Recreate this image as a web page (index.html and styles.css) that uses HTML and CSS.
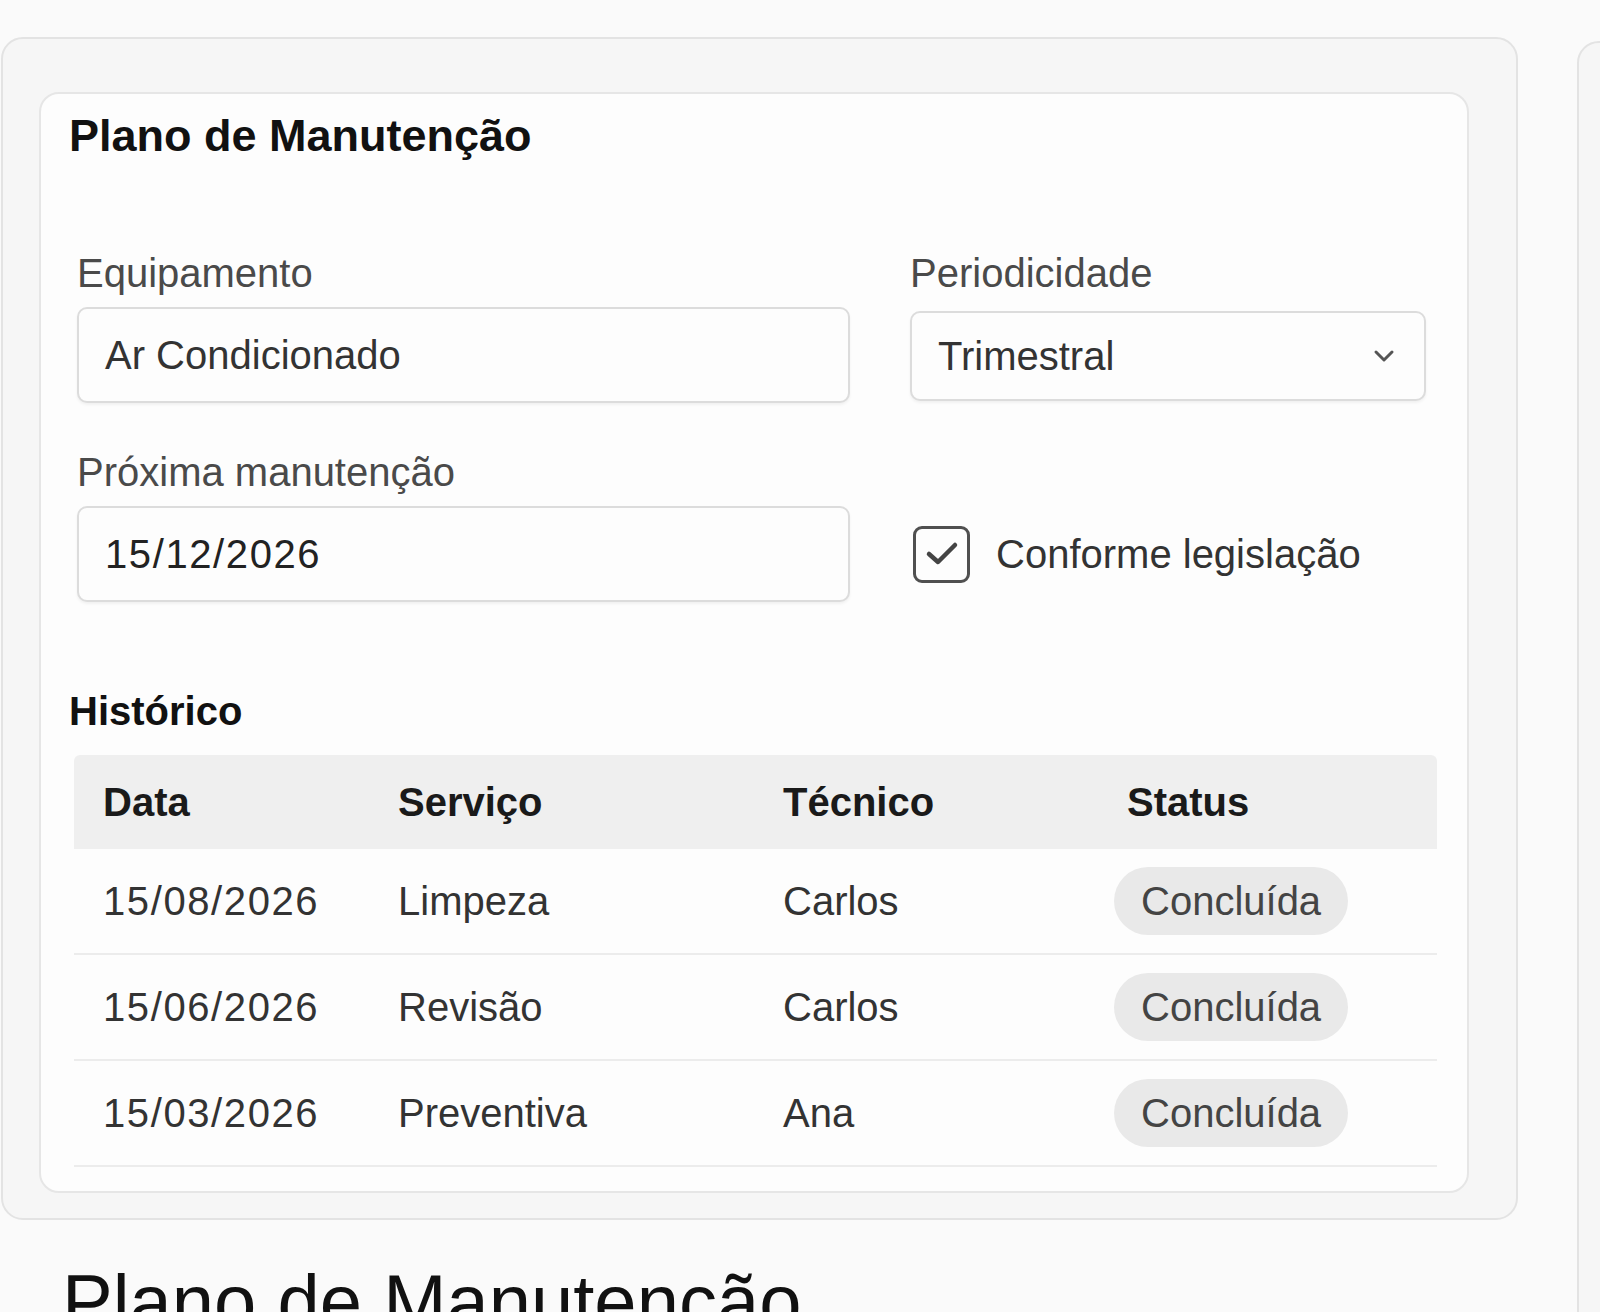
FILE: index.html
```html
<!DOCTYPE html>
<html lang="pt-BR">
<head>
<meta charset="utf-8">
<title>Plano de Manutenção</title>
<link rel="stylesheet" href="styles.css">
</head>
<body>
<div class="page">
  <div class="main-col">
    <section class="outer-card">
      <div class="inner-card">
        <h2 class="card-title">Plano de Manutenção</h2>
        <div class="form-grid">
          <div class="field">
            <label class="field-label">Equipamento</label>
            <div class="input">Ar Condicionado</div>
          </div>
          <div class="field">
            <label class="field-label">Periodicidade</label>
            <div class="input select">
              <span>Trimestral</span>
              <svg class="chevron" width="22" height="14" viewBox="0 0 22 14"><path d="M3 3 L11 11 L19 3" fill="none" stroke="#555" stroke-width="3" stroke-linecap="round" stroke-linejoin="round"/></svg>
            </div>
          </div>
          <div class="field">
            <label class="field-label">Próxima manutenção</label>
            <div class="input date-input"><span class="date">15/12/2026</span></div>
          </div>
          <div class="field check-field">
            <span class="checkbox">
              <svg width="34" height="26" viewBox="0 0 34 26"><path d="M4 13 L13 21 L30 4" fill="none" stroke="#444" stroke-width="4.5" stroke-linecap="round" stroke-linejoin="round"/></svg>
            </span>
            <span class="check-label">Conforme legislação</span>
          </div>
        </div>
        <h3 class="section-title">Histórico</h3>
        <table class="history">
          <colgroup>
            <col class="c1"><col class="c2"><col class="c3"><col class="c4">
          </colgroup>
          <thead>
            <tr><th>Data</th><th>Serviço</th><th>Técnico</th><th>Status</th></tr>
          </thead>
          <tbody>
            <tr><td><span class="date">15/08/2026</span></td><td>Limpeza</td><td>Carlos</td><td><span class="badge">Concluída</span></td></tr>
            <tr><td><span class="date">15/06/2026</span></td><td>Revisão</td><td>Carlos</td><td><span class="badge">Concluída</span></td></tr>
            <tr><td><span class="date">15/03/2026</span></td><td>Preventiva</td><td>Ana</td><td><span class="badge">Concluída</span></td></tr>
          </tbody>
        </table>
      </div>
    </section>
    <h1 class="page-title">Plano de Manutenção</h1>
  </div>
  <aside class="side-card"></aside>
</div>
</body>
</html>
```
FILE: styles.css
```css
* { box-sizing: border-box; }
html, body { margin: 0; padding: 0; }
body {
  background: #fafafa;
  font-family: "Liberation Sans", Arial, sans-serif;
  color: #222;
  width: 1600px;
  height: 1312px;
  overflow: hidden;
}
.page {
  display: flex;
  align-items: flex-start;
  gap: 59px;
  padding: 37px 0 0 1px;
  width: 2100px;
}
.main-col { width: 1517px; flex-shrink: 0; }
.outer-card {
  background: #f6f6f6;
  border: 2px solid #e3e3e3;
  border-radius: 22px;
  padding: 53px 47px 25px 36px;
}
.inner-card {
  background: #fdfdfd;
  border: 2px solid #e6e6e6;
  border-radius: 20px;
  padding: 15px 31px 24px 28px;
}
.card-title {
  margin: 0;
  font-size: 45px;
  line-height: 54px;
  font-weight: 700;
  color: #111;
}
.form-grid {
  display: grid;
  grid-template-columns: 773px 516px;
  column-gap: 60px;
  row-gap: 45px;
  margin: 86px 0 0 8px;
}
.field { display: flex; flex-direction: column; gap: 10px; }
.field-label {
  font-size: 40px;
  line-height: 48px;
  color: #4a4a4a;
}
.input {
  height: 96px;
  border: 2px solid #dcdcdc;
  border-radius: 10px;
  background: #fdfdfd;
  box-shadow: 0 2px 3px rgba(0,0,0,0.05);
  padding: 0 26px;
  display: flex;
  align-items: center;
  font-size: 40px;
  color: #333;
}
.select {
  height: 90px;
  margin-top: 4px;
  justify-content: space-between;
  padding-right: 29px;
}
.date-input { color: #222; }
.date { letter-spacing: 0.04em; }
.check-field {
  flex-direction: row;
  align-items: center;
  align-self: end;
  height: 96px;
  gap: 26px;
  padding-left: 3px;
}
.checkbox {
  width: 57px;
  height: 57px;
  border: 3.5px solid #505050;
  border-radius: 9px;
  display: flex;
  align-items: center;
  justify-content: center;
  flex-shrink: 0;
}
.check-label { font-size: 40px; color: #333; }
.section-title {
  margin: 85px 0 0 0;
  font-size: 40px;
  line-height: 48px;
  font-weight: 700;
  color: #111;
}
.history {
  margin: 20px 0 0 5px;
  width: 1363px;
  border-collapse: separate;
  border-spacing: 0;
  table-layout: fixed;
}
.c1 { width: 295px; }
.c2 { width: 385px; }
.c3 { width: 344px; }
.c4 { width: 339px; }
.history th {
  background: #efefef;
  height: 94px;
  text-align: left;
  padding: 0 0 0 29px;
  font-size: 40px;
  font-weight: 700;
  color: #1a1a1a;
}
.history th:first-child { border-top-left-radius: 6px; }
.history th:last-child { border-top-right-radius: 6px; }
.history td {
  height: 106px;
  padding: 0 0 0 29px;
  border-bottom: 2px solid #ececec;
  font-size: 40px;
  color: #333;
}
.badge {
  display: inline-block;
  margin-left: -13px;
  height: 68px;
  line-height: 68px;
  padding: 0 27px;
  border-radius: 34px;
  background: #e9e9e9;
  color: #444;
}
.page-title {
  margin: 36px 0 0 0;
  padding-left: 61px;
  font-size: 76px;
  line-height: 91px;
  font-weight: 400;
  color: #111;
}
.side-card {
  flex-shrink: 0;
  width: 400px;
  height: 1400px;
  margin-top: 4px;
  background: #f6f6f6;
  border: 2px solid #e3e3e3;
  border-radius: 22px;
}
```
